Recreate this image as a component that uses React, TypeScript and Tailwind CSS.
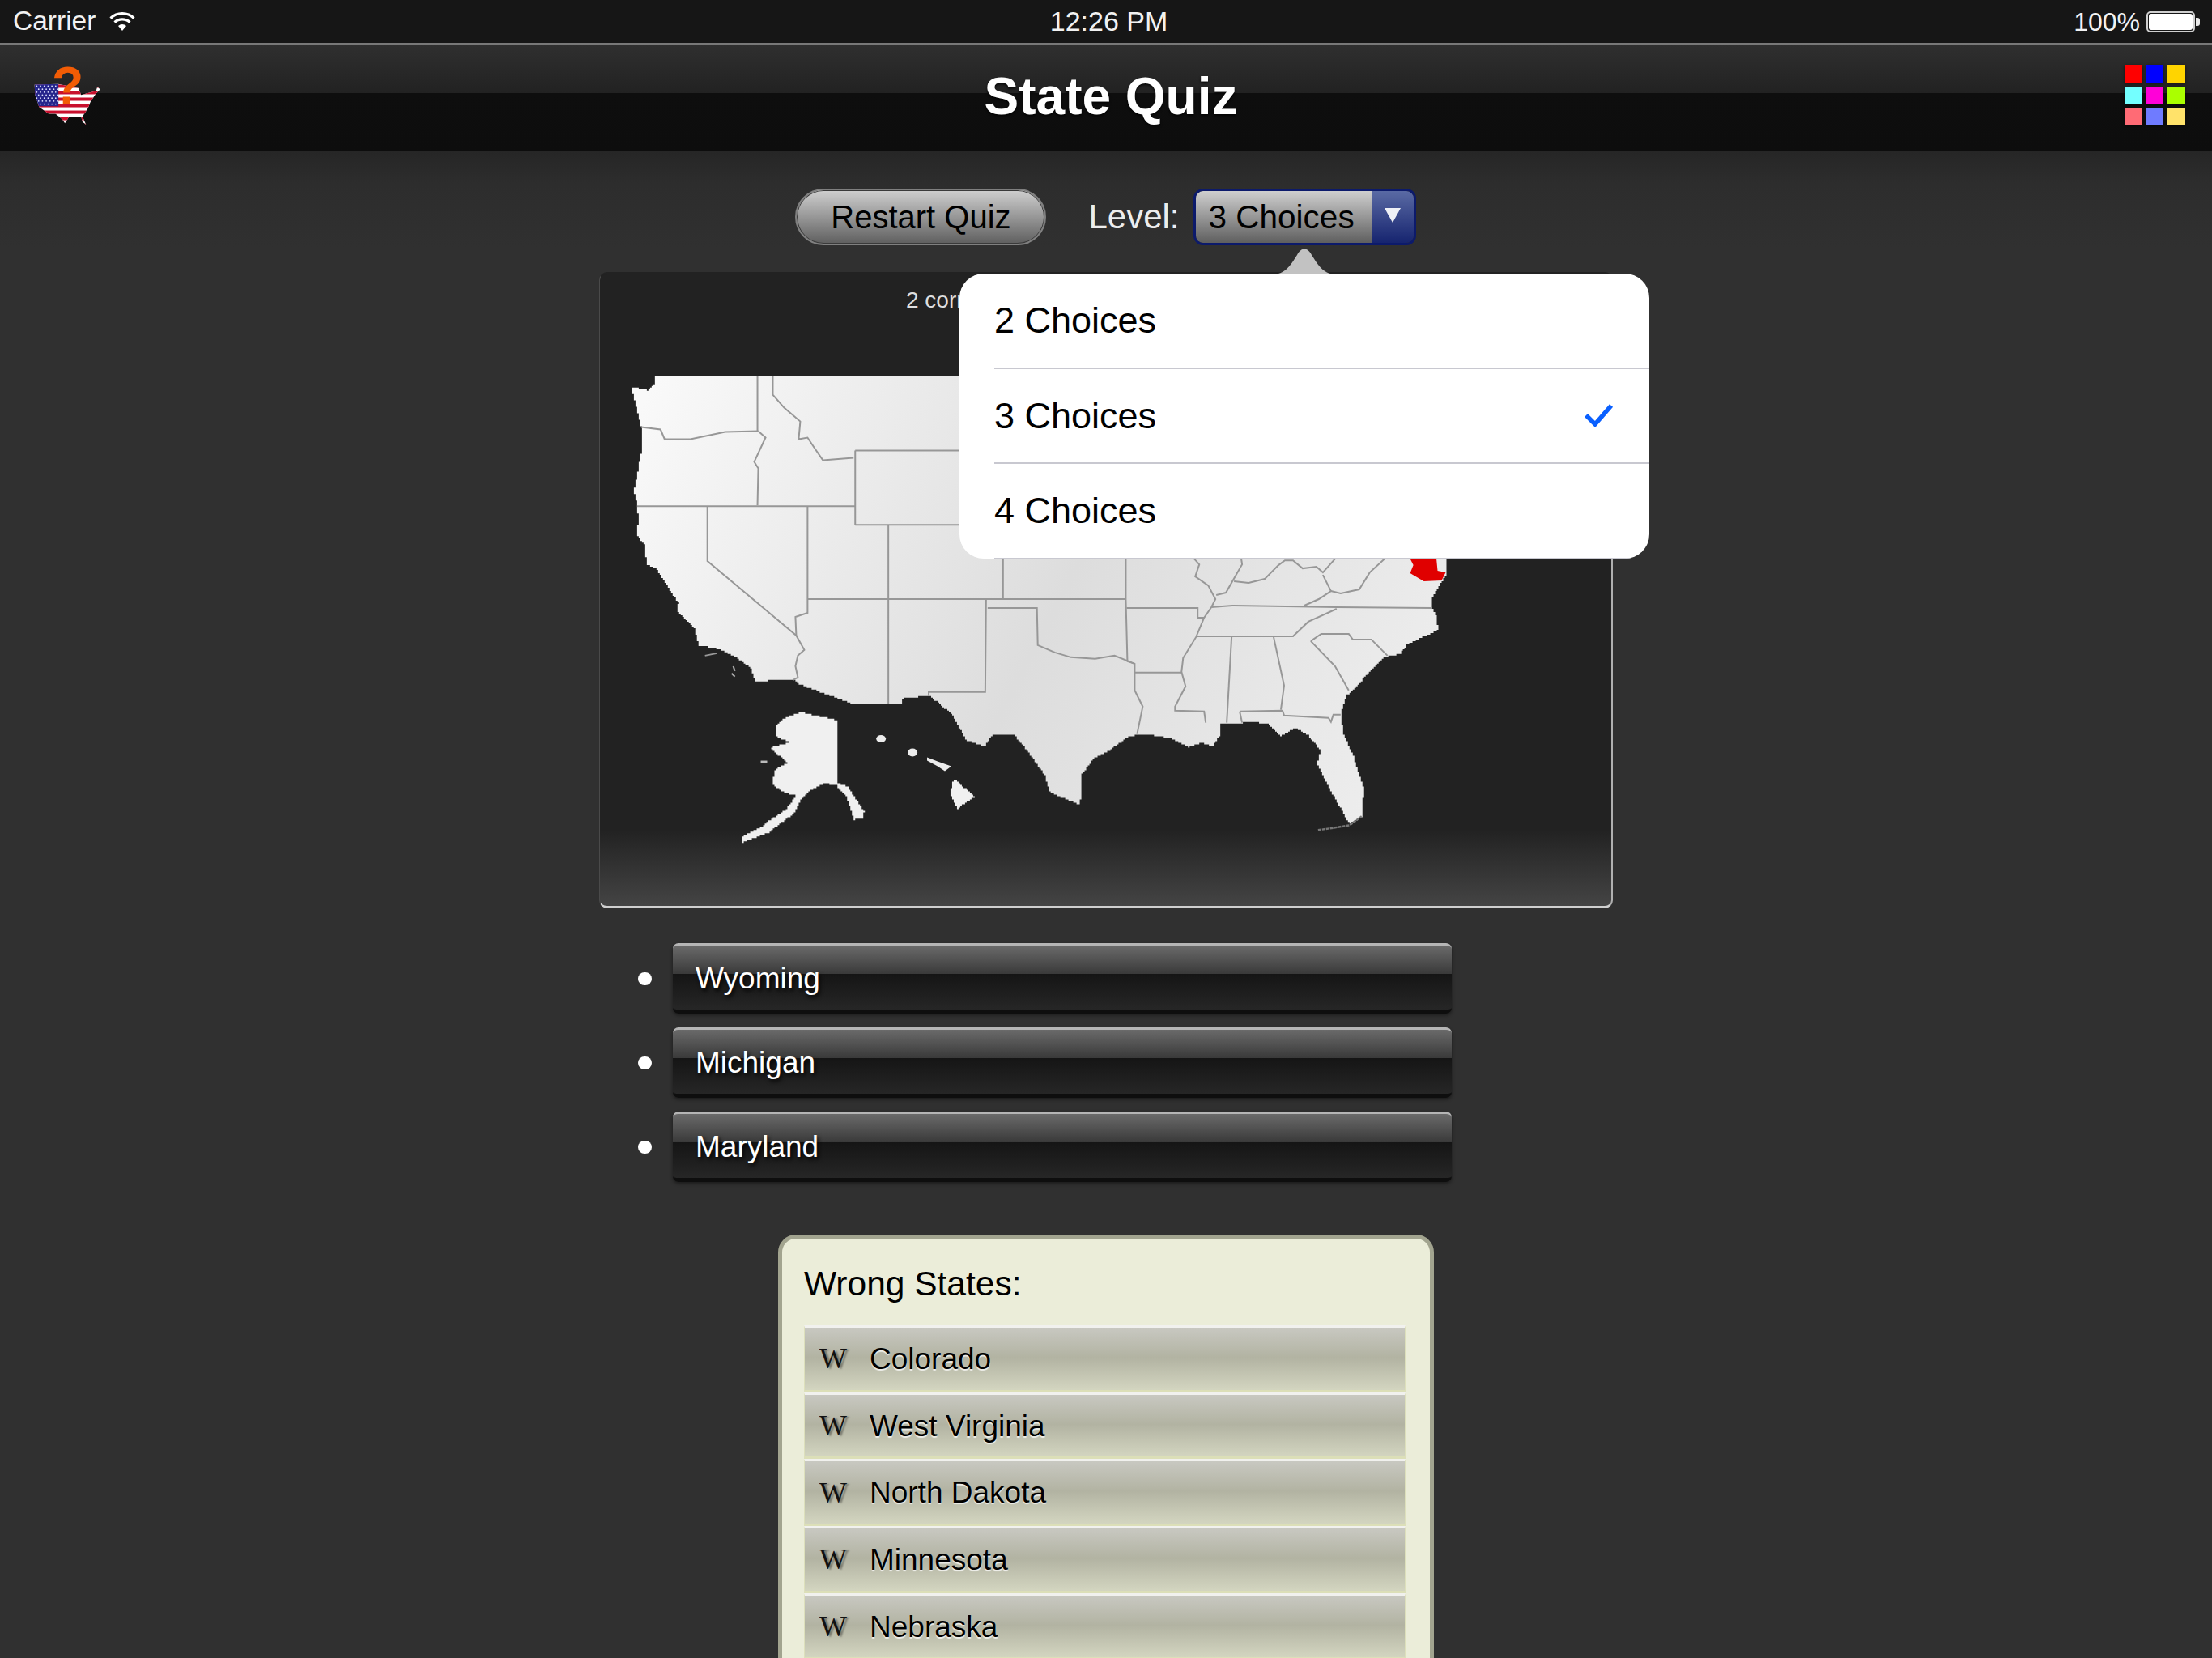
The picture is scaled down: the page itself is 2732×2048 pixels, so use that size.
import React from "react";

const SANS = "font-['Liberation_Sans',Arial,sans-serif]";

type Pt = [number, number];

const MAINLAND: Pt[] = [
  [807, 464], [807, 474], [800, 481], [779, 477], [786, 507], [791, 527], [791, 560], [786, 587], [782, 607],
  [786, 623], [788, 645], [785, 660], [795, 673], [798, 697], [810, 703], [823, 723], [837, 745], [835, 755],
  [857, 777], [862, 797], [887, 802], [907, 812], [927, 827], [932, 842], [978, 839], [983, 844], [1050, 869],
  [1113, 870], [1115, 862], [1147, 860], [1177, 885], [1187, 903], [1193, 915], [1215, 923], [1225, 907],
  [1250, 907], [1270, 930], [1290, 957], [1297, 980], [1333, 995], [1336, 982], [1335, 957], [1350, 938],
  [1370, 927], [1393, 910], [1413, 907], [1443, 912], [1467, 923], [1483, 918], [1497, 923], [1507, 907],
  [1507, 895], [1550, 892], [1567, 895], [1582, 910], [1600, 899], [1617, 910], [1632, 928], [1628, 943],
  [1647, 983], [1667, 1018], [1683, 1008], [1686, 973], [1673, 933], [1660, 903], [1657, 880], [1665, 857],
  [1683, 840], [1710, 812], [1730, 808], [1740, 795], [1778, 778], [1775, 760], [1769, 747], [1770, 737],
  [1787, 710], [1788, 690], [1788, 464],
];

const ALASKA: Pt[] = [
  [967, 887], [987, 880], [1033, 890], [1033, 968], [1047, 973], [1067, 1003], [1065, 1011], [1055, 1013],
  [1045, 983], [1033, 970], [1017, 968], [1000, 977], [990, 987], [980, 1006], [950, 1029], [917, 1042],
  [915, 1033], [943, 1019], [970, 1000], [983, 983], [970, 980], [953, 968], [957, 950], [972, 942], [962, 933],
  [952, 923], [975, 917], [958, 910], [957, 898],
];

const HAWAII: Pt[] = [[1178, 963], [1203, 985], [1183, 999], [1173, 980]];

const BORDERS = [
  "M935 464 L935 533",
  "M954 464 L954 487 L968 503 L988 520 L986 542 L997 540 L1005 552 L1016 568 L1054 565",
  "M791 527 L815 530 L820 542 L852 542 L895 533 L936 532",
  "M936 532 L945 540 L931 570 L936 578 L935 624",
  "M786 625 L1056 625",
  "M1056 556 L1056 648",
  "M1056 556 L1300 556",
  "M1056 648 L1300 648",
  "M873 625 L873 693 L983 785 L993 803 L985 810 L982 823 L985 837 L979 840",
  "M997 625 L997 757 L982 762 L983 785",
  "M1097 648 L1097 870",
  "M997 740 L1391 740",
  "M1239 680 L1239 740",
  "M1391 680 L1391 740 L1393 817 L1402 820",
  "M1218 740 L1217 855 L1147 855 L1147 860",
  "M1220 751 L1281 751 L1282 797 L1303 806 L1323 812 L1353 814 L1377 810 L1402 820 L1402 853 L1412 873 L1405 907",
  "M1392 751 L1480 751 L1480 763 L1488 763",
  "M1402 831 L1460 831",
  "M1497 750 L1488 763 L1478 787 L1462 813 L1460 830 L1465 848 L1452 873 L1452 878 L1488 879 L1490 893",
  "M1497 750 L1523 748 L1652 750 L1770 751",
  "M1478 786 L1598 786 L1617 768 L1652 752",
  "M1522 787 L1516 893",
  "M1574 787 L1587 847 L1583 877",
  "M1532 879 L1585 878 L1587 884 L1642 887 L1645 892 L1648 883 L1657 883",
  "M1532 879 L1535 893",
  "M1620 792 L1633 783 L1667 783 L1672 790 L1695 790 L1715 810",
  "M1620 792 L1650 823 L1667 853",
  "M1470 684 L1482 697 L1477 712 L1493 723 L1502 740 L1497 750",
  "M1533 684 L1535 697 L1523 718 L1515 732 L1503 735",
  "M1525 718 L1543 720 L1563 715 L1580 698 L1588 692 L1598 692 L1610 702 L1627 700 L1635 707 L1652 688",
  "M1635 710 L1645 730 L1630 740 L1612 748",
  "M1645 730 L1657 733 L1680 728 L1693 707 L1718 684",
];

// The reference map is a low-resolution picture: its diagonal coasts step in small stairs.
function stairs(points: Pt[], step = 2) {
  const snap = (v: number) => Math.round(v / step) * step;
  let d = `M${snap(points[0][0])} ${snap(points[0][1])}`;
  for (let i = 0; i < points.length; i++) {
    const [ax, ay] = points[i];
    const [bx, by] = points[(i + 1) % points.length];
    const n = Math.max(1, Math.ceil(Math.max(Math.abs(bx - ax), Math.abs(by - ay)) / step));
    for (let k = 1; k <= n; k++) {
      const x = snap(ax + ((bx - ax) * k) / n);
      const y = snap(ay + ((by - ay) * k) / n);
      d += ` H${x} V${y}`;
    }
  }
  return d + " Z";
}

function UsMap() {
  return (
    <svg viewBox="740 440 1252 620" className="block h-[620px] w-full mt-[53px]">
      <defs>
        <linearGradient id="land" gradientUnits="userSpaceOnUse" x1="780" y1="520" x2="1700" y2="1000">
          <stop offset="0" stopColor="#f9f9f9" />
          <stop offset="0.55" stopColor="#dddddd" />
          <stop offset="1" stopColor="#ededed" />
        </linearGradient>
      </defs>
      <path d={stairs(MAINLAND)} fill="url(#land)" />
      {BORDERS.map((d, i) => (
        <path key={i} d={d} fill="none" stroke="#979797" strokeWidth="2" />
      ))}
      <path
        d="M1740 684 L1747 698 L1743 708 L1760 718 L1782 717 L1787 707 L1777 705 L1775 684 Z"
        fill="#e00000"
      />
      <path d={stairs(ALASKA)} fill="#f0f0f0" />
      <path d={stairs(HAWAII)} fill="#f0f0f0" />
      <ellipse cx="1088" cy="913" rx="6" ry="4.5" fill="#ececec" />
      <ellipse cx="1127" cy="930" rx="6" ry="5" fill="#ececec" />
      <path d="M1145 936 L1158 941 L1175 947 L1167 953 L1158 947 L1145 940 Z" fill="#ececec" />
      <rect x="939" y="940" width="8" height="3" fill="#bbb" />
      <path d="M870 810 L885 807" fill="none" stroke="#999" strokeWidth="2" />
      <path d="M905 823 L907 829 M903 832 L907 836" fill="none" stroke="#aaa" strokeWidth="2" />
      <path d="M1629 1026 L1650 1023 L1668 1020 L1683 1009" fill="none" stroke="#777" strokeWidth="2.5" strokeDasharray="4 1" />
    </svg>
  );
}

function Logo() {
  const shape =
    "M128 312 L215 310 L290 325 L300 350 L355 335 L360 320 L370 330 L355 345 L335 375 L325 400 L305 430 L318 460 L305 450 L300 430 L255 432 L240 455 L230 440 L205 420 L180 420 L145 395 L130 350 Z";
  const stars: Pt[] = [];
  for (let r = 0; r < 7; r++) {
    for (let c = 0; c < 6; c++) stars.push([136 + c * 14 + (r % 2) * 7, 318 + r * 11]);
  }
  return (
    <svg viewBox="120 200 260 329" className="w-[87px] h-[110px] shrink-0">
      <defs>
        <clipPath id="usa">
          <path d={shape} />
        </clipPath>
      </defs>
      <path d={shape} fill="#fff" />
      <g clipPath="url(#usa)">
        {[0, 1, 2, 3, 4, 5, 6].map((i) => (
          <rect key={i} x="120" y={312 + i * 24} width="260" height="12" fill="#c8102e" />
        ))}
        <rect x="120" y="305" width="96" height="87" fill="#26268c" />
        {stars.map(([x, y], i) => (
          <circle key={i} cx={x} cy={y} r="2.6" fill="#dfe3ff" />
        ))}
      </g>
      <text
        x="250"
        y="382"
        textAnchor="middle"
        fontSize="192"
        fontWeight="700"
        fill="#f25c05"
        fontFamily="'Liberation Sans', Arial, sans-serif"
      >
        ?
      </text>
    </svg>
  );
}

function Wifi() {
  return (
    <svg viewBox="0 0 32 25" className="w-[32px] h-[25px]">
      <path d="M1.5 8.5 A21 21 0 0 1 30.5 8.5" fill="none" stroke="#fff" strokeWidth="3.2" />
      <path d="M6.5 13.5 A14 14 0 0 1 25.5 13.5" fill="none" stroke="#fff" strokeWidth="3.2" />
      <path d="M11 18 L16 24 L21 18 A7.5 7.5 0 0 0 11 18 Z" fill="#fff" />
    </svg>
  );
}

function Battery() {
  return (
    <div className="flex items-center">
      <div className="w-[60px] h-[26px] rounded-[5px] border-2 border-[#cfcfcf] p-[1px]">
        <div className="h-full w-full rounded-[3px] bg-white" />
      </div>
      <div className="w-[5px] h-[10px] ml-[1px] rounded-r-[3px] bg-[#e8e8e8]" />
    </div>
  );
}

const GRID = [
  "bg-[#ff0000]",
  "bg-[#0000ff]",
  "bg-[#ffd400]",
  "bg-[#73ffff]",
  "bg-[#ff00d8]",
  "bg-[#aaff00]",
  "bg-[#ff6b75]",
  "bg-[#6f7bff]",
  "bg-[#ffe26a]",
];

function ChoiceRow({ label, checked }: { label: string; checked?: boolean }) {
  return (
    <div className="pl-[43px]">
      <div className="h-[117.5px] flex items-center justify-between pr-[44px] border-b-2 border-[#c8c8d0]">
        <span className="text-[45px] text-black leading-none">{label}</span>
        {checked && (
          <svg viewBox="0 0 36 28" className="w-[36px] h-[28px]">
            <path d="M2 14 L13 25 L33 2" fill="none" stroke="#0a60ff" strokeWidth="5.5" />
          </svg>
        )}
      </div>
    </div>
  );
}

function Answer({ label }: { label: string }) {
  return (
    <div className="flex items-center h-[87px] gap-[26px]">
      <div className="w-[17px] h-[16px] rounded-full bg-white shrink-0" />
      <div className="w-[962px] h-[87px] rounded-[7px] flex items-center pl-[28px] pt-[2px] border-t-[3px] border-t-[#b5b5b5] border-b-[5px] border-b-[#0e0e0e] bg-[linear-gradient(#6a6a6a_0%,#3a3a3a_44%,#151515_44%,#262626_100%)] shadow-[0_2px_4px_rgba(0,0,0,0.45)]">
        <span className="text-[37px] leading-none text-white [text-shadow:2px_3px_5px_rgba(0,0,0,0.9)]">
          {label}
        </span>
      </div>
    </div>
  );
}

function WrongRow({ label }: { label: string }) {
  return (
    <div className="h-[82.7px] flex items-center pl-[18px] border-x border-x-[#dde0bc] border-t-[3px] border-t-[#f1f1ee] border-b-[3px] border-b-[#dcdfb8] bg-[linear-gradient(#c8c8c1_0%,#b2b3a2_48%,#d3d5c0_100%)]">
      <span className="w-[62px] font-['Liberation_Serif',serif] text-[36px] leading-none text-[#111] [text-shadow:3px_1px_2px_rgba(0,0,0,0.35)]">
        W
      </span>
      <span className="text-[37px] leading-none text-black [text-shadow:0_2px_1px_rgba(255,255,255,0.75)]">
        {label}
      </span>
    </div>
  );
}

export default function App() {
  return (
    <div className={`${SANS} relative w-[2732px] h-[2048px] overflow-hidden bg-[#303030]`}>
      {/* status bar */}
      <div className="h-[56px] border-b-[3px] border-b-[#787878] bg-[#161616] text-[#f2f2f2] text-[32px] grid grid-cols-3 items-center pl-[16px] pr-[15px]">
        <div className="flex items-center gap-[17px]">
          <span className="text-[33.5px]">Carrier</span>
          <Wifi />
        </div>
        <div className="text-center ml-[6px] text-[34px]">12:26 PM</div>
        <div className="flex items-center justify-end gap-[8px]">
          <span>100%</span>
          <Battery />
        </div>
      </div>

      {/* nav bar */}
      <div className="h-[131px] flex items-center pl-[40px] pr-[33px] bg-[linear-gradient(#2f2f2f_0%,#222_45%,#0e0e0e_45%,#0d0d0d_100%)]">
        <Logo />
        <h1 className="flex-1 text-center text-[64px] font-bold leading-none text-white pr-[7px] mb-[6px] [text-shadow:0_2px_3px_rgba(0,0,0,0.8)]">
          State Quiz
        </h1>
        <div className="grid grid-cols-3 gap-[5px] w-[75px] mb-[8px]">
          {GRID.map((c) => (
            <div key={c} className={`${c} h-[21.5px] shadow-[0_1px_3px_rgba(0,0,0,0.6)]`} />
          ))}
        </div>
      </div>

      {/* page */}
      <div className="relative flex flex-col items-center bg-[linear-gradient(#262626_0,#2d2d2d_40px,#303030_120px)]">
        {/* controls */}
        <div className="flex items-center h-[70px] mt-[46px] ml-[-1px]">
          <button className="w-[310px] h-[70px] rounded-full border-2 border-[#808080] shadow-[inset_0_0_0_1px_#3a3a3a] bg-[linear-gradient(#cfcfcf,#5f5f5f)] text-[40px] text-black leading-none">
            Restart Quiz
          </button>
          <span className="ml-[52px] text-[42px] text-[#ededed] leading-none">Level:</span>
          <div className="ml-[17px] w-[275px] h-[70px] flex rounded-[12px] border-[3px] border-[#0c1a6b] overflow-hidden">
            <div className="flex-1 flex items-center pl-[16px] bg-[linear-gradient(#cfcfcf,#5f5f5f)] text-[40.5px] text-black leading-none">
              3 Choices
            </div>
            <div className="w-[52px] flex justify-center pt-[21px] bg-[linear-gradient(#5a6aa4,#16246f)]">
              <svg viewBox="0 0 20 18" className="w-[20px] h-[18px]">
                <path d="M0 0 L20 0 L10 18 Z" fill="#eef0f6" />
              </svg>
            </div>
          </div>
        </div>

        {/* map panel */}
        <div className="mt-[33px] w-[1252px] h-[786px] overflow-hidden rounded-[10px] border-t-[3px] border-t-[#222] border-l border-l-[#4a4a4a] border-r-2 border-r-[#b0b0b0] border-b-[3px] border-b-[#cfcfcf] bg-[linear-gradient(#222_0%,#222_88%,#444_100%)]">
          <p className="pt-[16px] pl-[378px] text-[28px] leading-[32px] text-[#dedede]">2 correct</p>
          <UsMap />
        </div>

        {/* answers */}
        <div className="mt-[43px] w-[1252px] pl-[48px] flex flex-col gap-[17px]">
          <Answer label="Wyoming" />
          <Answer label="Michigan" />
          <Answer label="Maryland" />
        </div>

        {/* wrong states */}
        <div className="mt-[65px] w-[810px] h-[700px] rounded-[22px] border-[5px] border-[#a2a48f] bg-[#ebedd9] pl-[27px] pr-[30px] pt-[32px]">
          <h2 className="text-[42.5px] leading-[48px] font-normal text-black">Wrong States:</h2>
          <div className="mt-[27px]">
            <WrongRow label="Colorado" />
            <WrongRow label="West Virginia" />
            <WrongRow label="North Dakota" />
            <WrongRow label="Minnesota" />
            <WrongRow label="Nebraska" />
          </div>
        </div>
      </div>

      {/* popover */}
      <div className="absolute left-[1185px] top-[338px] w-[852px] h-[352px] rounded-[30px] bg-white overflow-hidden">
        <ChoiceRow label="2 Choices" />
        <ChoiceRow label="3 Choices" checked />
        <ChoiceRow label="4 Choices" />
      </div>
      <svg viewBox="0 0 80 36" className="absolute left-[1571px] top-[303px] w-[80px] h-[36px]">
        <path d="M0 36 C16 36 22 26 31 12 C36 2 44 2 49 12 C58 26 64 36 80 36 Z" fill="#c2c2c2" />
      </svg>
    </div>
  );
}
